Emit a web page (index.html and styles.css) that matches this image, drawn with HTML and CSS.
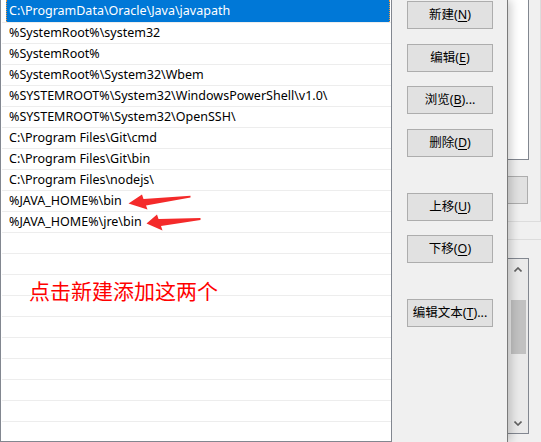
FILE: index.html
```html
<!DOCTYPE html>
<html>
<head>
<meta charset="utf-8">
<title>编辑环境变量</title>
<link rel="stylesheet" href="styles.css">
</head>
<body>
<div class="dialog">
  <div class="list">
    <div class="row sel"><span class="hl">C:\ProgramData\Oracle\Java\javapath</span></div>
    <div class="row">%SystemRoot%\system32</div>
    <div class="row">%SystemRoot%</div>
    <div class="row">%SystemRoot%\System32\Wbem</div>
    <div class="row">%SYSTEMROOT%\System32\WindowsPowerShell\v1.0\</div>
    <div class="row">%SYSTEMROOT%\System32\OpenSSH\</div>
    <div class="row">C:\Program Files\Git\cmd</div>
    <div class="row">C:\Program Files\Git\bin</div>
    <div class="row">C:\Program Files\nodejs\</div>
    <div class="row">%JAVA_HOME%\bin</div>
    <div class="row">%JAVA_HOME%\jre\bin</div>
    <div class="row"></div>
    <div class="row"></div>
    <div class="row"></div>
    <div class="row"></div>
    <div class="row"></div>
    <div class="row"></div>
    <div class="row"></div>
    <div class="row"></div>
    <div class="row"></div>
    <div class="row"></div>
  </div>
  <div class="buttons">
    <button class="btn b1">新建(<u>N</u>)</button>
    <button class="btn b2">编辑(<u>E</u>)</button>
    <button class="btn b3">浏览(<u>B</u>)...</button>
    <button class="btn b4">删除(<u>D</u>)</button>
    <button class="btn b5">上移(<u>U</u>)</button>
    <button class="btn b6">下移(<u>O</u>)</button>
    <button class="btn b7">编辑文本(<u>T</u>)...</button>
  </div>
  <div class="note">点击新建添加这两个</div>
  <svg class="arrows" width="508" height="442" viewBox="0 0 508 442">
    <polygon points="128.5,203.5 142,194.5 143.5,199 190.5,195.8 190.5,197.6 146,205.5 147.5,209.5" fill="#f42a2a"/>
    <polygon points="146.5,223.5 157,214.5 158.5,219 200.5,218 200.5,219.9 161,226 162.5,230.5" fill="#f42a2a"/>
  </svg>
</div>
<div class="behind">
  <div class="grp1">
    <div class="blist"></div>
    <div class="bbtn"></div>
  </div>
  <div class="grp2">
    <div class="sbox">
      <div class="sb-arrow">
        <svg width="8" height="5" viewBox="0 0 8 5"><polyline points="0.5,4.5 4,1 7.5,4.5" fill="none" stroke="#606060" stroke-width="1.6"/></svg>
      </div>
      <div class="thumb"></div>
      <div class="sb-fill"></div>
      <div class="sb-arrow">
        <svg width="8" height="5" viewBox="0 0 8 5"><polyline points="0.5,0.5 4,4 7.5,0.5" fill="none" stroke="#606060" stroke-width="1.6"/></svg>
      </div>
    </div>
  </div>
</div>
</body>
</html>
```

FILE: styles.css
```css
html, body {
  margin: 0;
  padding: 0;
}

body {
  width: 541px;
  height: 442px;
  overflow: hidden;
  background: #f0f0f0;
  display: flex;
  font-family: "Noto Sans", "Noto Sans CJK SC", sans-serif;
  font-size: 12.5px;
  color: #000;
}

.dialog {
  position: relative;
  z-index: 1;
  flex-shrink: 0;
  width: 507px;
  height: 442px;
  border-right: 1px solid #7a7a7a;
  background: #f0f0f0;
  display: flex;
  align-items: flex-start;
  box-shadow: 3px 0 9px rgba(0, 0, 0, 0.2);
}

.list {
  width: 389px;
  height: 441px;
  padding-left: 1px;
  border: 1px solid #828790;
  border-top: none;
  background: #fff;
  overflow: hidden;
  flex-shrink: 0;
}

.row {
  height: 20px;
  line-height: 20px;
  border-bottom: 1px solid #ededed;
  padding-left: 7px;
  white-space: nowrap;
}

.row.sel {
  height: 22px;
  padding-left: 0;
}

.hl {
  display: block;
  box-sizing: border-box;
  height: 22px;
  margin-left: 4px;
  margin-right: 1px;
  padding-left: 2px;
  line-height: 22px;
  background: #0078d7;
  color: #fff;
  border-left: 1px dotted #f39a3c;
  border-right: 1px dotted #f39a3c;
}

.buttons {
  margin-left: 15px;
  width: 86px;
  display: flex;
  flex-direction: column;
}

.btn {
  box-sizing: border-box;
  width: 86px;
  height: 28px;
  padding: 0;
  border: 1px solid #adadad;
  background: #e1e1e1;
  font-family: "Noto Sans", "Noto Sans CJK SC", sans-serif;
  font-size: 12.5px;
  color: #000;
  line-height: 26px;
  text-align: center;
}

.btn u {
  text-underline-offset: 2px;
}

.b1 { margin-top: 1px; }
.b2 { margin-top: 15px; }
.b3 { margin-top: 14px; }
.b4 { margin-top: 15px; }
.b5 { margin-top: 36px; }
.b6 { margin-top: 14px; }
.b7 { margin-top: 36px; }

.note {
  position: absolute;
  left: 29px;
  top: 280px;
  font-family: "Noto Sans CJK SC", sans-serif;
  font-size: 21px;
  line-height: 21px;
  color: #ff0000;
  white-space: nowrap;
}

.arrows {
  position: absolute;
  left: 0;
  top: 0;
  pointer-events: none;
}

.behind {
  width: 33px;
  height: 442px;
  flex-shrink: 0;
}

.grp1 {
  height: 221px;
  border-right: 1px solid #dcdcdc;
  border-bottom: 1px solid #dcdcdc;
}

.blist {
  width: 20px;
  height: 159px;
  background: #fff;
  border-right: 1px solid #828790;
  border-bottom: 1px solid #828790;
}

.bbtn {
  margin-top: 16px;
  width: 19px;
  height: 26px;
  background: #e1e1e1;
  border: 1px solid #adadad;
  border-left: none;
}

.grp2 {
  margin-top: 17px;
  border-top: 1px solid #dcdcdc;
  padding-top: 18px;
}

.sbox {
  width: 20px;
  height: 174px;
  background: #eaeaea;
  border: 1px solid #828790;
  border-left: none;
  display: flex;
  flex-direction: column;
}

.sb-arrow {
  height: 20px;
  display: flex;
  align-items: center;
  justify-content: center;
}

.thumb {
  margin-top: 21px;
  margin-left: 3px;
  width: 15px;
  height: 54px;
  background: #c1c1c1;
}

.sb-fill {
  flex: 1;
}
```
